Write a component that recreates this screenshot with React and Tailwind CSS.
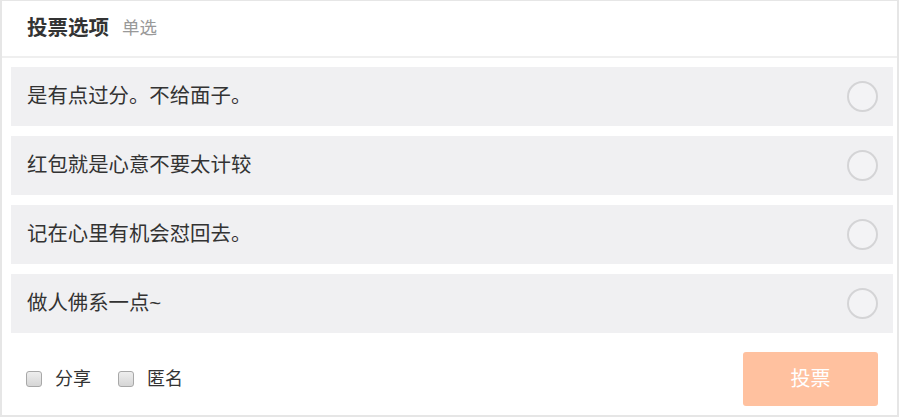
export default function App() {
  const options = ['是有点过分。不给面子。', '红包就是心意不要太计较', '记在心里有机会怼回去。', '做人佛系一点~'];

  return (
    <div
      className="w-[899px] h-[417px] bg-white border-2 border-[#e6e6e6] border-t-1 flex flex-col"
      style={{ fontFamily: '"Liberation Sans", "Noto Sans CJK SC", sans-serif' }}
    >
      {/* Header */}
      <div className="h-[57px] flex items-center pl-[25px] border-b-2 border-[#efefef] shrink-0">
        <span className="text-[20.5px] font-bold text-[#333]">投票选项</span>
        <span className="ml-[13px] text-[17.5px] text-[#999]">单选</span>
      </div>

      {/* Options */}
      <div className="flex flex-col gap-[10px] pl-[9px] pr-[4px] pt-[9px]">
        {options.map((opt) => (
          <div key={opt} className="h-[59px] bg-[#f0f0f2] flex items-center justify-between pl-[16px] pr-[15px]">
            <span className="text-[20.4px] text-[#333]">{opt}</span>
            <span className="w-[31px] h-[31px] rounded-full border-2 border-[#d4d4d6] bg-[#f3f3f5]" />
          </div>
        ))}
      </div>

      {/* Footer */}
      <div className="flex items-center justify-between pl-[24px] pr-[19px] mt-[19px]">
        <div className="flex items-center text-[18px] text-[#333]">
          <label className="flex items-center">
            <span className="w-[16px] h-[16px] rounded-[3px] border border-[#a8a8a8] bg-gradient-to-b from-[#eeeeee] to-[#d6d6d6]" />
            <span className="ml-[13px]">分享</span>
          </label>
          <label className="flex items-center ml-[27px]">
            <span className="w-[16px] h-[16px] rounded-[3px] border border-[#a8a8a8] bg-gradient-to-b from-[#eeeeee] to-[#d6d6d6]" />
            <span className="ml-[13px]">匿名</span>
          </label>
        </div>
        <button className="w-[135px] h-[54px] rounded-[3px] bg-[#ffc19f] text-white text-[20px]">投票</button>
      </div>
    </div>
  );
}
